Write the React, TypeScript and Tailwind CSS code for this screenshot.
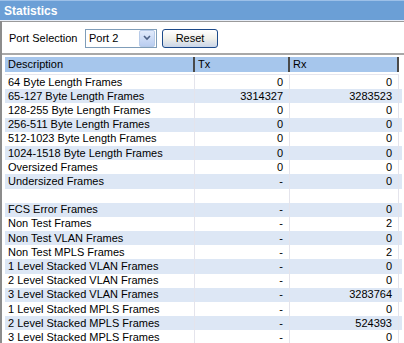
import React from "react";

const rows: [string, string, string][] = [
  ["64 Byte Length Frames", "0", "0"],
  ["65-127 Byte Length Frames", "3314327", "3283523"],
  ["128-255 Byte Length Frames", "0", "0"],
  ["256-511 Byte Length Frames", "0", "0"],
  ["512-1023 Byte Length Frames", "0", "0"],
  ["1024-1518 Byte Length Frames", "0", "0"],
  ["Oversized Frames", "0", "0"],
  ["Undersized Frames", "-", "0"],
  ["", "", ""],
  ["FCS Error Frames", "-", "0"],
  ["Non Test Frames", "-", "2"],
  ["Non Test VLAN Frames", "-", "0"],
  ["Non Test MPLS Frames", "-", "2"],
  ["1 Level Stacked VLAN Frames", "-", "0"],
  ["2 Level Stacked VLAN Frames", "-", "0"],
  ["3 Level Stacked VLAN Frames", "-", "3283764"],
  ["1 Level Stacked MPLS Frames", "-", "0"],
  ["2 Level Stacked MPLS Frames", "-", "524393"],
  ["3 Level Stacked MPLS Frames", "-", "0"],
  ["", "", ""],
];

export default function App() {
  return (
    <div
      className="w-[404px] h-[343px] overflow-hidden bg-white text-[11px] text-black"
      style={{ fontFamily: '"Liberation Sans", Arial, sans-serif' }}
    >
      <div className="h-[20px] bg-[#6b9fd6] border-t border-[#9cc0e8] flex items-center pl-[4px]">
        <span className="text-white font-bold text-[12px] leading-none">Statistics</span>
      </div>
      <div className="h-[1px] bg-[#e8eef8]" />
      <div className="border-l-2 border-[#8c8c8c]">
        <div className="h-[1px] bg-[#9a9a9a]" />
        <div className="h-[33px] flex items-center pl-[7px] pt-[1px] border-b-2 border-[#a8a8a8]">
          <span className="w-[76px]">Port Selection</span>
          <div className="w-[72px] h-[19px] border border-[#7f9db9] bg-white flex items-center">
            <span className="flex-1 pl-[3px]">Port 2</span>
            <div className="w-[16px] h-[17px] mr-[1px] rounded-[2px] border border-[#b8cbe8] bg-gradient-to-b from-[#e1eafb] to-[#b9cdf0] flex items-center justify-center">
              <svg width="8" height="6" viewBox="0 0 8 6">
                <path d="M1 1 L4 4 L7 1" stroke="#4d6185" strokeWidth="1.6" fill="none" />
              </svg>
            </div>
          </div>
          <div className="ml-[5px] w-[56px] h-[19px] rounded-[3px] border border-[#1c4a8a] bg-gradient-to-b from-white via-[#f0f0ea] to-[#c9d5e8] flex items-center justify-center">
            Reset
          </div>
        </div>
        <div className="pl-[3px] pt-[2px]">
          <div className="flex h-[15px] w-[394px]">
            <div className="w-[190px] bg-[#a6c6ec] border-r-2 border-[#4a4a4a] pl-[3px] flex items-center">Description</div>
            <div className="w-[95px] bg-[#a6c6ec] border-r-2 border-[#4a4a4a] pl-[3px] flex items-center">Tx</div>
            <div className="w-[109px] bg-[#a6c6ec] border-r-2 border-[#4a4a4a] pl-[3px] flex items-center">Rx</div>
          </div>
          <div className="h-[3px] w-[394px] border-b border-[#e6e6ee]" />
          <div className="flex flex-col w-[397px]">
            {rows.map((r, i) => (
              <div
                key={i}
                className={`flex shrink-0 h-[14.2px] items-center leading-[13px] ${i % 2 === 1 ? "bg-[#dde7f5]" : "bg-white"}`}
              >
                <div className="w-[190px] h-full pl-[3px] flex items-center border-r border-[#e4e4ec] whitespace-nowrap">{r[0]}</div>
                <div className="w-[95px] h-full pr-[6px] flex items-center justify-end border-r border-[#e4e4ec]">{r[1]}</div>
                <div className="w-[109px] h-full pr-[6px] flex items-center justify-end border-r border-[#e4e4ec]">{r[2]}</div>
              </div>
            ))}
          </div>
        </div>
      </div>
    </div>
  );
}
